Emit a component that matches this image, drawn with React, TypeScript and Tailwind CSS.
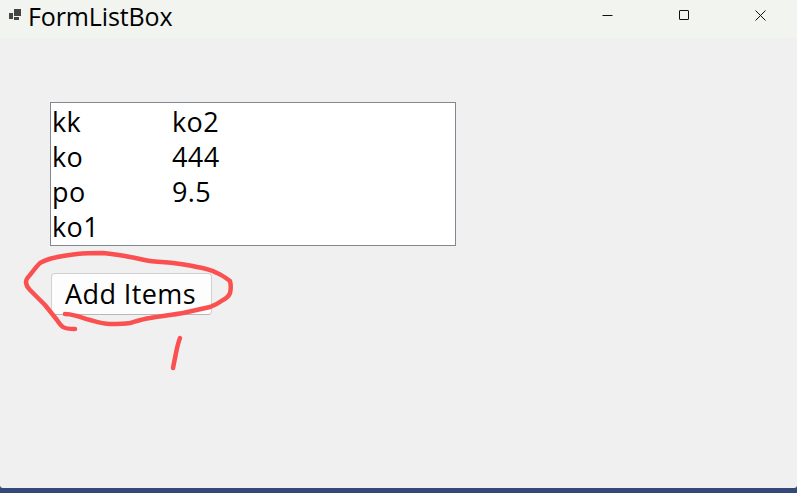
const FONT = "font-['Open_Sans','Noto_Sans',sans-serif]";

const rows = [
  ['kk', 'ko2'],
  ['ko', '444'],
  ['po', '9.5'],
  ['ko1', ''],
];

function TitleBar() {
  return (
    <div className="flex h-[38px] shrink-0 items-start bg-[#f1f4ef] pl-[9px]">
      <svg width="12" height="11" viewBox="0 0 12 11" className="mt-[9px] shrink-0" fill="#444">
        <rect x="0" y="4" width="4" height="6" />
        <rect x="5" y="0" width="7" height="7" />
        <rect x="5" y="8" width="5" height="3" />
      </svg>
      <span className="ml-[7px] mt-[2px] text-[25px] leading-[28px] tracking-[-0.13px] text-black">FormListBox</span>
      <div className="ml-auto flex">
        <div className="flex h-[30px] w-[77px] items-center justify-center">
          <svg width="11" height="11" viewBox="0 0 11 11" stroke="#111" fill="none">
            <path d="M0.5 5.5h10" />
          </svg>
        </div>
        <div className="flex h-[30px] w-[77px] items-center justify-center">
          <svg width="11" height="11" viewBox="0 0 11 11" stroke="#111" fill="none">
            <rect x="0.5" y="0.5" width="9" height="9" rx="0.5" />
          </svg>
        </div>
        <div className="flex h-[30px] w-[74px] items-center justify-center">
          <svg width="11" height="11" viewBox="0 0 11 11" stroke="#111" fill="none">
            <path d="M0.5 0.5l10 10M10.5 0.5l-10 10" />
          </svg>
        </div>
      </div>
    </div>
  );
}

export default function App() {
  return (
    <div className={`relative h-[493px] w-[797px] overflow-hidden bg-[#34497a] ${FONT}`}>
      <div className="flex h-[488px] flex-col overflow-hidden rounded-b-[3px] bg-[#f0f0f0]">
        <TitleBar />
        <div className="flex flex-1 flex-col items-start pl-[50px] pt-[64px]">
          {/* List box */}
          <div className="h-[144px] w-[406px] border border-[#828790] bg-white pl-[1px] pt-[1px]">
            {rows.map(([a, b]) => (
              <div key={a} className="grid h-[35px] grid-cols-[120px_1fr] items-center text-[27px] leading-none tracking-[0.4px] text-black">
                <span>{a}</span>
                <span>{b}</span>
              </div>
            ))}
          </div>
          <button className="ml-[1px] mt-[27px] flex h-[42px] w-[161px] items-center justify-center rounded-[4px] border border-[#d0d0d0] border-b-[#b8b8b8] bg-[#fdfdfd] pb-[2px] pr-[2px] text-[27px] leading-none tracking-[0.4px] text-black">
            Add Items
          </button>
        </div>
      </div>
      {/* pen annotation over the window */}
      <svg className="absolute left-0 top-0" width="797" height="493" fill="none" stroke="#fb5050" strokeWidth="4.5" strokeLinecap="round" strokeLinejoin="round">
        <path d="M65 314C70 314 73 315 77 316C81 317 85 319 90 320C97 322 103 324 110 324C117 324 123 324 130 323C137 321 143 319 150 318C161 316 172 315 183 313C192 311 201 309 210 307C215 305 219 303 223 300C227 298 229 296 230 293C231 289 231 285 230 281C226 278 222 275 217 273C211 270 204 268 197 267C189 265 181 264 173 263C165 262 157 262 150 261C143 260 137 258 130 257C121 255 112 254 103 253C94 253 86 253 77 254C69 255 61 256 53 258C48 259 44 261 40 263C36 267 33 271 30 275C28 277 26 279 26 282C26 285 28 288 30 290C35 295 40 300 45 305C49 310 53 315 57 320C59 323 61 326 63 327C66 329 71 329 75 329" />
        <path d="M180 338C178 343 177 348 176 353C175 358 174 363 173 368" />
      </svg>
    </div>
  );
}
